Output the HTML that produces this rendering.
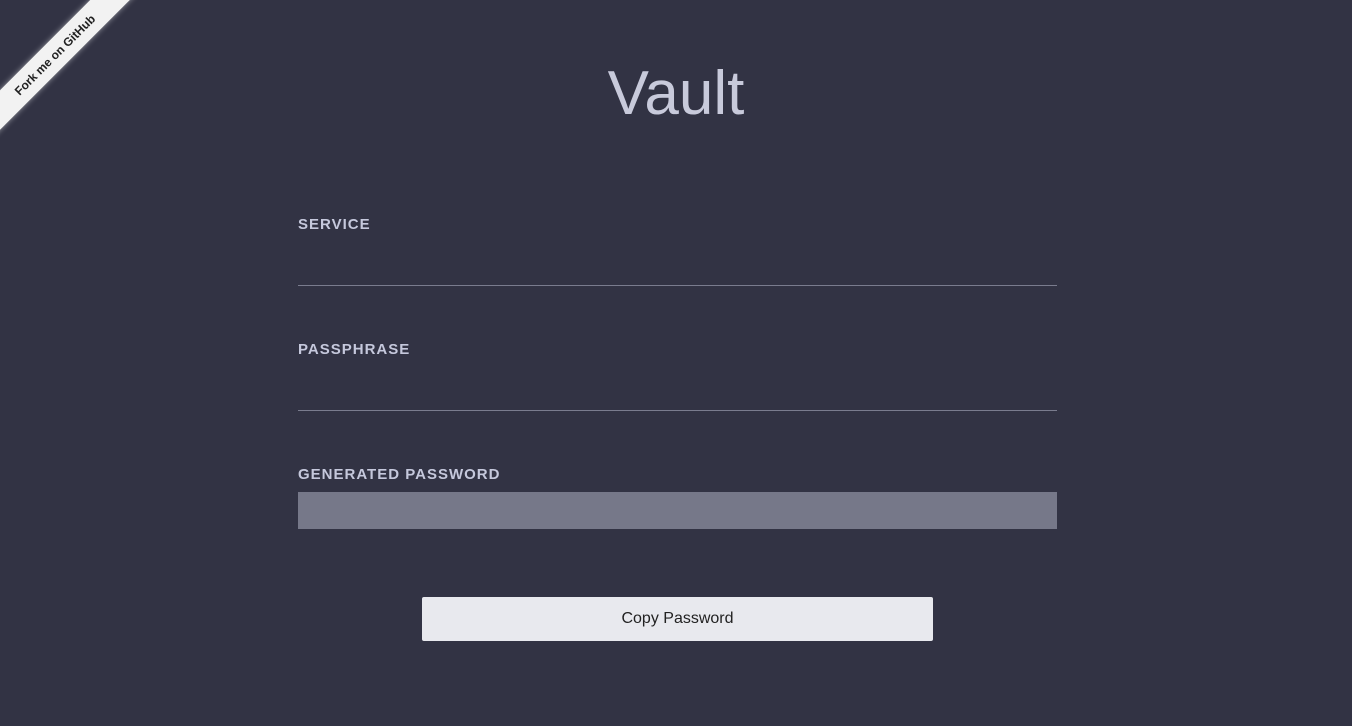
<!DOCTYPE html>
<html><head><style>
html,body{margin:0;padding:0;width:1352px;height:726px;overflow:hidden;background:#323344;font-family:"Liberation Sans",sans-serif;position:relative}
.rib{position:absolute;left:-45.5px;top:40.5px;width:200px;height:28px;background:#f2f2f2;transform:rotate(-45deg);box-shadow:0 0 6px rgba(255,255,255,.5);text-align:center;line-height:28px;font-size:12px;font-weight:bold;color:#222}
h1{position:absolute;top:58px;left:0;width:1352px;text-align:center;margin:0;font-weight:300;font-size:62px;color:#c8cadb;line-height:72px}
.lab{position:absolute;left:298px;font-size:15px;font-weight:bold;letter-spacing:1px;color:#c5c8dc}
.line{position:absolute;left:298px;width:759px;height:1px;background:#7a7c8e}
.box{position:absolute;left:298px;top:492px;width:759px;height:37px;background:#767889}
.btn{position:absolute;left:422px;top:597px;width:511px;height:44px;background:#e8e9ee;border-radius:2px;text-align:center;line-height:44px;font-size:16px;color:#222}
</style></head><body>
<div class="rib">Fork me on GitHub</div>
<h1>Vault</h1>
<div class="lab" style="top:216px">SERVICE</div>
<div class="line" style="top:285px"></div>
<div class="lab" style="top:341px">PASSPHRASE</div>
<div class="line" style="top:410px"></div>
<div class="lab" style="top:466px">GENERATED PASSWORD</div>
<div class="box"></div>
<div class="btn">Copy Password</div>
</body></html>
